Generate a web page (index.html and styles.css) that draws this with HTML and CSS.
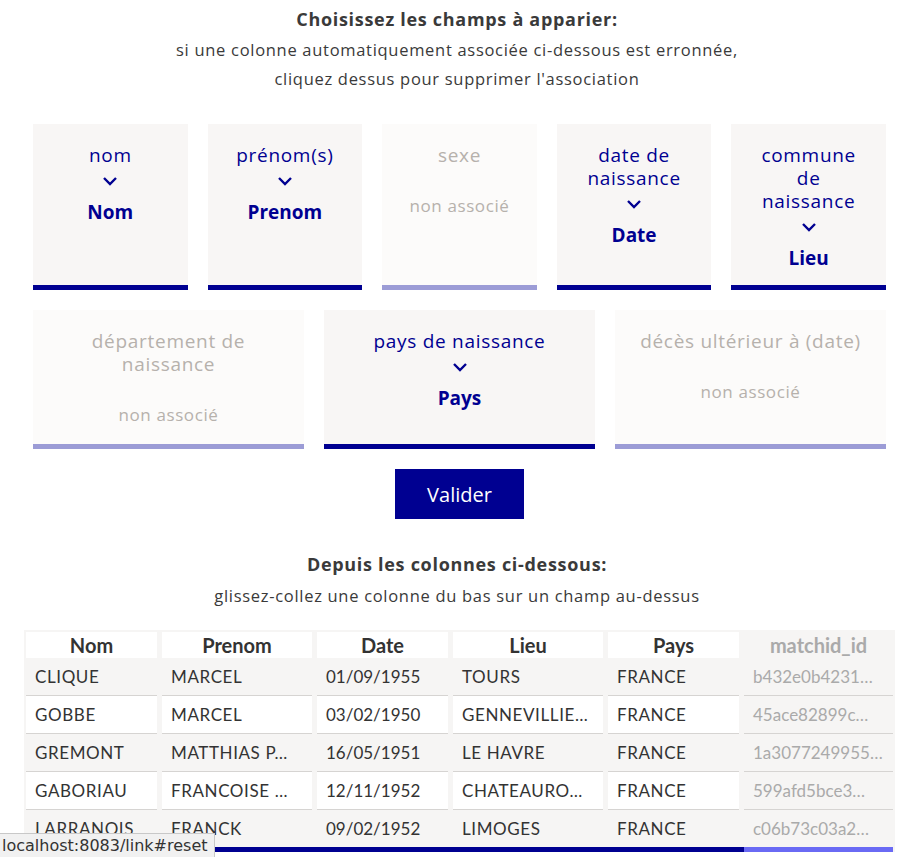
FILE: index.html
```html
<!DOCTYPE html>
<html lang="fr">
<head>
<meta charset="utf-8">
<title>Appariement</title>
<link rel="stylesheet" href="styles.css">
</head>
<body>
<main class="page">
  <section class="intro">
    <h2 class="title">Choisissez les champs à apparier:</h2>
    <p class="sub">si une colonne automatiquement associée ci-dessous est erronnée,</p>
    <p class="sub">cliquez dessus pour supprimer l'association</p>
  </section>

  <div class="cards row1">
    <div class="card on">
      <div class="label">nom</div>
      <div class="chev"><svg width="16" height="10" viewBox="0 0 16 10"><path d="M2 2 L8 8 L14 2" fill="none" stroke="#000091" stroke-width="2.4"/></svg></div>
      <div class="value">Nom</div>
    </div>
    <div class="card on">
      <div class="label">prénom(s)</div>
      <div class="chev"><svg width="16" height="10" viewBox="0 0 16 10"><path d="M2 2 L8 8 L14 2" fill="none" stroke="#000091" stroke-width="2.4"/></svg></div>
      <div class="value">Prenom</div>
    </div>
    <div class="card off">
      <div class="label">sexe</div>
      <div class="none">non associé</div>
    </div>
    <div class="card on">
      <div class="label">date de<br>naissance</div>
      <div class="chev"><svg width="16" height="10" viewBox="0 0 16 10"><path d="M2 2 L8 8 L14 2" fill="none" stroke="#000091" stroke-width="2.4"/></svg></div>
      <div class="value">Date</div>
    </div>
    <div class="card on">
      <div class="label">commune<br>de<br>naissance</div>
      <div class="chev"><svg width="16" height="10" viewBox="0 0 16 10"><path d="M2 2 L8 8 L14 2" fill="none" stroke="#000091" stroke-width="2.4"/></svg></div>
      <div class="value">Lieu</div>
    </div>
  </div>

  <div class="cards row2">
    <div class="card off">
      <div class="label">département de<br>naissance</div>
      <div class="none">non associé</div>
    </div>
    <div class="card on">
      <div class="label">pays de naissance</div>
      <div class="chev"><svg width="16" height="10" viewBox="0 0 16 10"><path d="M2 2 L8 8 L14 2" fill="none" stroke="#000091" stroke-width="2.4"/></svg></div>
      <div class="value">Pays</div>
    </div>
    <div class="card off">
      <div class="label">décès ultérieur à (date)</div>
      <div class="none">non associé</div>
    </div>
  </div>

  <div class="actions"><button class="btn">Valider</button></div>

  <section class="intro intro2">
    <h2 class="title">Depuis les colonnes ci-dessous:</h2>
    <p class="sub">glissez-collez une colonne du bas sur un champ au-dessus</p>
  </section>

  <div class="table">
    <div class="col w1">
      <div class="th">Nom</div>
      <div class="td odd">CLIQUE</div>
      <div class="td">GOBBE</div>
      <div class="td odd">GREMONT</div>
      <div class="td">GABORIAU</div>
      <div class="td odd last">LARRANOIS</div>
    </div>
    <div class="col w2">
      <div class="th">Prenom</div>
      <div class="td odd">MARCEL</div>
      <div class="td">MARCEL</div>
      <div class="td odd">MATTHIAS P…</div>
      <div class="td">FRANCOISE …</div>
      <div class="td odd last">FRANCK</div>
    </div>
    <div class="col w1">
      <div class="th">Date</div>
      <div class="td odd num">01/09/1955</div>
      <div class="td num">03/02/1950</div>
      <div class="td odd num">16/05/1951</div>
      <div class="td num">12/11/1952</div>
      <div class="td odd last num">09/02/1952</div>
    </div>
    <div class="col w2">
      <div class="th">Lieu</div>
      <div class="td odd">TOURS</div>
      <div class="td">GENNEVILLIE…</div>
      <div class="td odd">LE HAVRE</div>
      <div class="td">CHATEAURO…</div>
      <div class="td odd last">LIMOGES</div>
    </div>
    <div class="col w1">
      <div class="th">Pays</div>
      <div class="td odd">FRANCE</div>
      <div class="td">FRANCE</div>
      <div class="td odd">FRANCE</div>
      <div class="td">FRANCE</div>
      <div class="td odd last">FRANCE</div>
    </div>
    <div class="col w3 dis">
      <div class="th">matchid_id</div>
      <div class="td odd num">b432e0b4231…</div>
      <div class="td num">45ace82899c…</div>
      <div class="td odd num">1a3077249955…</div>
      <div class="td num">599afd5bce3…</div>
      <div class="td odd last num">c06b73c03a2…</div>
    </div>
  </div>
</main>
<div class="status">localhost:8083/link#reset</div>
</body>
</html>
```
FILE: styles.css
```css
* { box-sizing: border-box; }
html, body { margin: 0; padding: 0; background: #fff; }
body {
  font-family: "Open Sans", Lato, sans-serif;
  color: #3a3a3a;
  width: 914px;
  height: 857px;
  overflow: hidden;
}
.page { padding-top: 4px; }
.intro { text-align: center; }
.title {
  margin: 0;
  font-size: 18px;
  font-weight: 700;
  letter-spacing: 0.7px;
  line-height: 31px;
}
.sub {
  margin: 0;
  font-size: 16.5px;
  letter-spacing: 0.7px;
  line-height: 29px;
}
.cards {
  display: grid;
  gap: 20px;
  margin-left: 33px;
  width: 853px;
}
.row1 { grid-template-columns: repeat(5, 1fr); margin-top: 31px; }
.row1 .card { height: 166px; }
.row2 { grid-template-columns: repeat(3, 1fr); margin-top: 20px; }
.row2 .card { height: 139px; }
.card {
  padding-top: 20px;
  text-align: center;
  border-bottom: 5px solid #000091;
  background: #f8f6f5;
}
.card.off {
  background: #fcfbfa;
  border-bottom-color: #9c9cd6;
}
.label {
  font-size: 19px;
  letter-spacing: 0.7px;
  line-height: 23px;
  color: #000091;
}
.off .label { color: #b6b1ac; }
.chev {
  height: 27px;
  display: flex;
  align-items: center;
  justify-content: center;
}
.value {
  margin-top: 6px;
  font-size: 19px;
  font-weight: 700;
  line-height: 25px;
  color: #000091;
}
.none {
  margin-top: 27px;
  font-size: 17px;
  letter-spacing: 0.6px;
  line-height: 23px;
  color: #b6b1ac;
}
.actions {
  margin-top: 20px;
  display: flex;
  justify-content: center;
  padding-left: 5px;
}
.btn {
  width: 129px;
  height: 50px;
  border: 0;
  background: #000091;
  color: #fff;
  font-family: "Open Sans", Lato, sans-serif;
  font-size: 20px;
}
.intro2 { margin-top: 29px; }
.intro2 .title { line-height: 32px; }
.intro2 .sub { line-height: 32px; }
.table {
  margin-top: 18px;
  margin-left: 24px;
  width: 871px;
  background: #f6f5f4;
  padding: 2px 2px 0 2px;
  display: flex;
}
.col {
  border-bottom: 5px solid #000091;
  padding-right: 5px;
}
.col.w1 { width: 136px; }
.col.w2 { width: 155px; }
.col.w3 { width: 149px; padding-right: 0; border-bottom-color: #6a6af4; }
.th {
  height: 26px;
  background: #fff;
  text-align: center;
  font-family: Lato, sans-serif;
  font-size: 20px;
  font-weight: 700;
  line-height: 26px;
  color: #333;
}
.td {
  height: 38px;
  line-height: 37px;
  padding-left: 9px;
  border-bottom: 1px solid #d6d4d2;
  background: #fff;
  font-family: Lato, sans-serif;
  font-size: 17px;
  letter-spacing: 0.6px;
  color: #333;
  white-space: nowrap;
  overflow: hidden;
}
.td.num { letter-spacing: 0; }
.td.odd { background: #f6f5f4; }
.td.last { border-bottom: 0; height: 37px; }
.dis .th, .dis .td { background: #f6f5f4; color: #aaa; }
.status {
  position: fixed;
  left: 0;
  bottom: 0;
  height: 24px;
  padding: 0 6px 0 2px;
  background: #f1f1f1;
  border: 1px solid #c8c8c8;
  border-left: 0;
  border-bottom: 0;
  font-family: "DejaVu Sans", sans-serif;
  font-size: 16px;
  line-height: 23px;
  color: #333;
}
```
